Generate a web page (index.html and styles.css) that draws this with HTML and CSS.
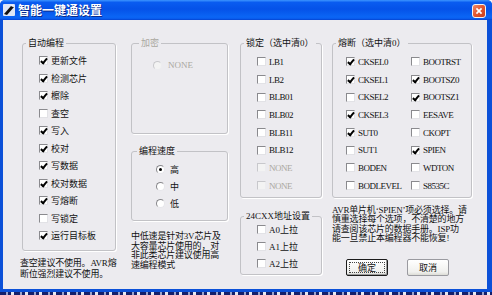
FILE: index.html
```html
<!DOCTYPE html>
<html lang="zh-CN">
<head>
  <meta charset="UTF-8">
  <title>智能一键通设置</title>
  <link rel="stylesheet" href="styles.css">
</head>
<body>

  <div class="window">
    <div class="titlebar">
      <svg class="app-icon" viewBox="0 0 12 12">
        <rect x="0" y="0" width="12" height="12" rx="1" fill="#dfe6f5"/>
        <polygon points="1,10 8,2 11,3 4,11" fill="#111"/>
        <polygon points="8,2 11,3 10,1" fill="#fff"/>
      </svg>
      <span class="title">智能一键通设置</span>
      <span class="close">
        <svg viewBox="0 0 14 14"><path d="M4 4 L10 10 M10 4 L4 10" stroke="#fff" stroke-width="2"/></svg>
      </span>
    </div>

    <div class="client">

      <div class="col col-auto">
        <div class="group g-auto">
          <span class="cap">自动编程</span>
          <div class="opt"><span class="box on"></span>更新文件</div>
          <div class="opt"><span class="box on"></span>检测芯片</div>
          <div class="opt"><span class="box on"></span>檫除</div>
          <div class="opt"><span class="box"></span>查空</div>
          <div class="opt"><span class="box on"></span>写入</div>
          <div class="opt"><span class="box on"></span>校对</div>
          <div class="opt"><span class="box on"></span>写数据</div>
          <div class="opt"><span class="box on"></span>校对数据</div>
          <div class="opt"><span class="box on"></span>写熔断</div>
          <div class="opt"><span class="box"></span>写锁定</div>
          <div class="opt"><span class="box on"></span>运行目标板</div>
        </div>
        <p class="note note-auto">查空建议不使用。AVR熔<br>断位强烈建议不使用。</p>
      </div>

      <div class="col col-speed">
        <div class="group g-enc">
          <span class="cap off">加密</span>
          <div class="opt off"><span class="radio"></span>NONE</div>
        </div>
        <div class="group g-speed">
          <span class="cap">编程速度</span>
          <div class="opt"><span class="radio on"></span>高</div>
          <div class="opt"><span class="radio"></span>中</div>
          <div class="opt"><span class="radio"></span>低</div>
        </div>
        <p class="note note-speed">中低速是针对3V芯片及<br>大容量芯片使用的，对<br>非此类芯片建议使用高<br>速编程模式</p>
      </div>

      <div class="col col-lock">
        <div class="group g-lock">
          <span class="cap">锁定（选中清0）</span>
          <div class="opt"><span class="box"></span>LB1</div>
          <div class="opt"><span class="box"></span>LB2</div>
          <div class="opt"><span class="box"></span>BLB01</div>
          <div class="opt"><span class="box"></span>BLB02</div>
          <div class="opt"><span class="box"></span>BLB11</div>
          <div class="opt"><span class="box"></span>BLB12</div>
          <div class="opt off"><span class="box"></span>NONE</div>
          <div class="opt off"><span class="box"></span>NONE</div>
        </div>
        <div class="group g-addr">
          <span class="cap">24CXX地址设置</span>
          <div class="opt"><span class="box"></span>A0上拉</div>
          <div class="opt"><span class="box"></span>A1上拉</div>
          <div class="opt"><span class="box"></span>A2上拉</div>
        </div>
      </div>

      <div class="col col-fuse">
        <div class="group g-fuse">
          <span class="cap">熔断（选中清0）</span>
          <div class="fuse-grid">
            <div class="opt"><span class="box on"></span>CKSEL0</div>
            <div class="opt"><span class="box"></span>BOOTRST</div>
            <div class="opt"><span class="box on"></span>CKSEL1</div>
            <div class="opt"><span class="box on"></span>BOOTSZ0</div>
            <div class="opt"><span class="box"></span>CKSEL2</div>
            <div class="opt"><span class="box on"></span>BOOTSZ1</div>
            <div class="opt"><span class="box on"></span>CKSEL3</div>
            <div class="opt"><span class="box"></span>EESAVE</div>
            <div class="opt"><span class="box on"></span>SUT0</div>
            <div class="opt"><span class="box"></span>CKOPT</div>
            <div class="opt"><span class="box"></span>SUT1</div>
            <div class="opt"><span class="box on"></span>SPIEN</div>
            <div class="opt"><span class="box"></span>BODEN</div>
            <div class="opt"><span class="box"></span>WDTON</div>
            <div class="opt"><span class="box"></span>BODLEVEL</div>
            <div class="opt"><span class="box"></span>S8535C</div>
          </div>
        </div>
        <p class="note note-fuse">AVR单片机‘SPIEN’项必须选择。请<br>慎重选择每个选项，不清楚的地方<br>请查阅该芯片的数据手册。ISP功<br>能一旦禁止本编程器不能恢复!</p>
        <div class="buttons">
          <button class="btn default">确定</button>
          <button class="btn">取消</button>
        </div>
      </div>

    </div>
  </div>
  <div class="under"></div>

</body>
</html>
```

FILE: styles.css
```css
* { box-sizing: border-box; margin: 0; padding: 0; }
body {
  width: 492px;
  height: 295px;
  overflow: hidden;
  background: #f4f4f6;
  font-family: "Liberation Serif", "Noto Sans CJK SC", serif;
  font-size: 9px;
  color: #111;
}

/* window frame */
.window {
  width: 492px;
  height: 292px;
  background: #0b50d8;
  border-radius: 5px 5px 0 0;
  display: flex;
  flex-direction: column;
}

.titlebar {
  height: 20px;
  display: flex;
  align-items: center;
  padding: 0 6px 0 3px;
  border-radius: 5px 5px 0 0;
  background: linear-gradient(180deg, #3d95ff 0, #0a5cf0 12%, #0552e8 45%, #0b66f5 85%, #0a5ef0 92%, #0443d0 100%);
}

.app-icon { width: 12px; height: 12px; margin-right: 3px; flex: none; }

.title {
  flex: 1;
  color: #fff;
  font: bold 12px "Noto Sans CJK SC", sans-serif;
  line-height: 14px;
  text-shadow: 1px 1px #0a2a8a;
}

.close {
  width: 14px;
  height: 14px;
  margin-top: 2px;
  border: 1px solid #f4f4f4;
  border-radius: 3px;
  background: linear-gradient(135deg, #f08a6a 0, #e2552f 50%, #c8401d 100%);
  display: flex;
}

.close svg { width: 12px; height: 12px; }

.client {
  flex: 1;
  margin: 0 5px 3px 3px;
  background: #ecebef;
  display: flex;
  padding: 23px 0 0 19px;
}

.under {
  height: 3px;
  background: repeating-linear-gradient(90deg, #15206a 0 6px, #9aa4cc 6px 8px, #15206a 8px 11px, #e6e8f0 11px 14px);
}

/* columns */
.col-auto { width: 94px; }
.col-speed { width: 97px; margin-left: 15px; }
.col-lock { width: 82px; margin-left: 12px; }
.col-fuse { width: 140px; margin-left: 10px; }

/* group boxes */
.group {
  border: 1px solid #c2c2c6;
  border-radius: 3px;
  box-shadow: 1px 1px 0 #fff;
}

.cap {
  display: table;
  margin: -6px 0 0 3px;
  padding: 0 2px;
  line-height: 10px;
  white-space: nowrap;
  background: #ecebef;
}

.g-auto { padding: 0 0 5px 16px; }
.g-auto .cap { margin-bottom: 4px; }
.g-enc { height: 91px; padding-left: 21px; }
.g-enc .cap { margin: -6px 0 10px 5px; }
.g-speed { margin-top: 17px; padding: 0 0 8px 24px; }
.g-speed .cap { margin: -6px 0 5px -19px; }
.g-lock { padding: 0 0 2px 16px; }
.g-lock .cap, .g-fuse .cap { margin-bottom: 5px; }
.g-lock .cap, .g-addr .cap { margin-left: -13px; }
.g-addr { margin-top: 18px; padding: 0 0 2px 16px; }
.g-fuse { padding: 0 0 2px 13px; }
.g-fuse .cap { margin-left: -10px; }
.g-enc .cap { margin-left: -14px; }
.g-auto .cap { margin-left: -13px; }

.fuse-grid {
  display: grid;
  grid-template-columns: 65px 1fr;
}

/* options */
.opt {
  display: flex;
  align-items: center;
  height: 17.5px;
  white-space: nowrap;
}

.g-lock .opt, .g-fuse .opt { height: 17.7px; letter-spacing: -0.5px; }
.g-addr .opt { height: 17px; }
.g-speed .opt { height: 17px; }
.g-enc .opt { height: 14px; }

.off { color: #aaa8a0; }

.box {
  position: relative;
  flex: none;
  width: 9px;
  height: 9px;
  margin-right: 3px;
  background: #fff;
  border: 1px solid;
  border-color: #8a8a8e #e2e2e6 #e2e2e6 #8a8a8e;
}

.box.on::after {
  content: "";
  position: absolute;
  left: 2px;
  top: 0;
  width: 2px;
  height: 5px;
  border: solid #000;
  border-width: 0 2px 2px 0;
  transform: rotate(40deg);
}

.off .box { background: #f3f3f3; border-color: #c8c8cc #ececef #ececef #c8c8cc; }

.radio {
  position: relative;
  flex: none;
  width: 9px;
  height: 9px;
  margin-right: 5px;
  border-radius: 50%;
  background: #fff;
  border: 1px solid;
  border-color: #88888c #e6e6ea #e6e6ea #88888c;
}

.radio.on::after {
  content: "";
  position: absolute;
  left: 2px;
  top: 2px;
  width: 3px;
  height: 3px;
  border-radius: 50%;
  background: #000;
}

.off .radio { background: #f3f3f3; border-color: #c8c8cc #ececef #ececef #c8c8cc; margin-right: 6px; }

/* notes */
.note {
  white-space: nowrap;
  line-height: 9.5px;
  letter-spacing: -0.2px;
}

.note-auto { margin: 7px 0 0 -2px; line-height: 11px; }
.note-speed { margin-top: 11px; }
.note-fuse { margin-top: 8px; }

/* buttons */
.buttons {
  display: flex;
  gap: 19px;
  margin: 15px 0 0 14px;
}

.btn {
  position: relative;
  width: 42px;
  height: 17px;
  font-family: "Noto Sans CJK SC", sans-serif;
  font-size: 9px;
  color: #111;
  background: linear-gradient(#ffffff, #f0f0ee 80%, #dcdcd6);
  border: 1px solid #9a9aa0;
  border-radius: 2px;
}

.btn.default { border-color: #1b1b1b; box-shadow: inset -1px -1px #9c9c9c; }

.btn.default::before {
  content: "";
  position: absolute;
  inset: 2px;
  border: 1px dotted #444;
}
```
